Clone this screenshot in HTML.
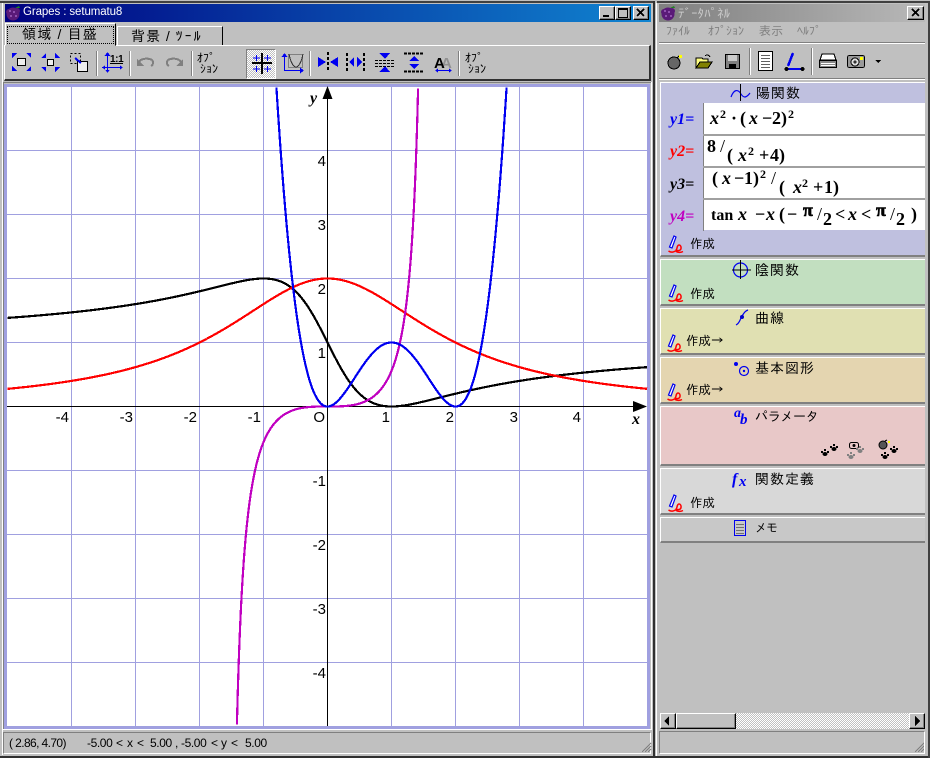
<!DOCTYPE html>
<html><head><meta charset="utf-8"><style>
html,body{margin:0;padding:0;background:#c0c0c0;width:930px;height:758px;overflow:hidden}
.a{position:absolute}
.t{position:absolute;white-space:nowrap;font-family:"Liberation Sans","IPAGothic","WenQuanYi Zen Hei",sans-serif;color:#000;line-height:1}
.p{position:absolute;left:660px;width:265px;box-sizing:border-box;border-top:1px solid #fff;border-left:1px solid #fff;border-bottom:2px solid #808080}
.btn{position:absolute;background:#c0c0c0;box-sizing:border-box;border:1px solid;border-color:#fff #000 #000 #fff;box-shadow:inset -1px -1px 0 #808080}
.box{position:absolute;left:703px;width:222px;background:#fff;box-sizing:border-box}
svg{position:absolute;overflow:visible}
.ar{font-family:"IPAGothic","WenQuanYi Zen Hei",sans-serif}
</style></head><body>
<!-- window frames -->
<div class="a" style="left:0;top:1px;width:655px;height:2px;background:#404040"></div>
<div class="a" style="left:657px;top:1px;width:273px;height:2px;background:#404040"></div>
<div class="a" style="left:653px;top:1px;width:2px;height:757px;background:#303030"></div>
<div class="a" style="left:656px;top:3px;width:1px;height:755px;background:#fff"></div>
<div class="a" style="left:2px;top:3px;width:1px;height:752px;background:#fff"></div>
<div class="a" style="left:0;top:756px;width:930px;height:2px;background:#303030"></div>
<div class="a" style="left:928px;top:3px;width:2px;height:755px;background:#404040"></div>

<!-- main title -->
<div class="a" style="left:5px;top:4px;width:646px;height:18px;background:linear-gradient(90deg,#000080,#1084d0)"></div>
<div class="t" style="left:23px;top:7px;font-size:11.500px;color:#fff;letter-spacing:-.1px">Grapes : setumatu8</div>
<div class="btn" style="left:599px;top:6px;width:16px;height:14px"></div>
<div class="btn" style="left:615px;top:6px;width:16px;height:14px"></div>
<div class="btn" style="left:633px;top:6px;width:16px;height:14px"></div>
<svg class="a" style="left:0;top:0" width="930" height="80">
 <g fill="#5a1a78"><circle cx="13" cy="14" r="6.500"/><circle cx="9" cy="12" r="3"/><circle cx="17" cy="11" r="3"/></g>
 <g fill="#a060c0"><circle cx="10" cy="11" r="1"/><circle cx="14" cy="12" r="1"/><circle cx="11" cy="16" r="1"/><circle cx="16" cy="16" r="1"/></g>
 <path d="M15 8l4-2 1 2z" fill="#208020"/>
 <g shape-rendering="crispEdges">
 <rect x="603" y="15" width="6" height="2" fill="#000"/>
 <path d="M618.500 8.500h9v9h-9zM618 9.500h10" fill="none" stroke="#000"/>
 <path d="M637 9l7 7M644 9l-7 7" stroke="#000" stroke-width="2"/>
 </g>
</svg>

<!-- tabs -->
<div class="a" style="left:5px;top:23px;width:111px;height:23px;box-sizing:border-box;border:1px solid;border-color:#fff #000 #c0c0c0 #fff;z-index:2;background:#c0c0c0"></div>
<div class="a" style="left:7px;top:26px;width:107px;height:18px;box-sizing:border-box;border:1px dotted #000;z-index:3"></div>
<div class="a" style="left:117px;top:26px;width:106px;height:20px;box-sizing:border-box;border:1px solid;border-color:#fff #000 #c0c0c0 #fff"></div>
<div class="t" style="left:22px;top:27px;font-size:14px;z-index:4;letter-spacing:1.200px">領域 / 目盛</div>
<div class="t" style="left:131px;top:29px;font-size:14px;letter-spacing:1px">背景 / <span style="letter-spacing:2px">ﾂｰﾙ</span></div>

<!-- toolbar main -->
<div class="a" style="left:4px;top:45px;width:647px;height:36px;box-sizing:border-box;border-top:1px solid #fff;border-left:1px solid #fff;border-right:2px solid #303030;border-bottom:2px solid #303030"></div>
<div class="a" style="left:246px;top:49px;width:30px;height:30px;box-sizing:border-box;border:1px solid;border-color:#808080 #fff #fff #808080;background:repeating-conic-gradient(#fff 0 25%,#c0c0c0 0 50%) 0 0/2px 2px"></div>
<svg class="a" style="left:0;top:0" width="660" height="82" shape-rendering="crispEdges">
 <g stroke="#808080"><path d="M96.500 51v25M129.500 51v25M191.500 51v25M309.500 51v25M458.500 51v25"/></g>
 <g stroke="#fff"><path d="M97.500 51v25M130.500 51v25M192.500 51v25M310.500 51v25M459.500 51v25"/></g>
 <!-- expand -->
 <rect x="17.500" y="58.500" width="8" height="7" fill="#eee" stroke="#000"/>
 <g fill="#0000f0"><path d="M12 53h5l-5 5zM31 53h-5l5 5zM12 71h5l-5-5zM31 71h-5l5-5z"/></g>
 <!-- shrink -->
 <rect x="47.500" y="59.500" width="6" height="6" fill="#eee" stroke="#000"/>
 <g fill="#0000f0"><path d="M46 58h-5l5-5zM55 58h5l-5-5zM46 67h-5l5 5zM55 67h5l-5 5z"/></g>
 <!-- zoom box -->
 <rect x="70.500" y="53.500" width="10" height="10" fill="none" stroke="#000" stroke-dasharray="2 2"/>
 <rect x="77.500" y="61.500" width="10" height="10" fill="#eee" stroke="#000"/>
 <path d="M75 58l6 5" stroke="#0000f0" stroke-width="2"/>
 <!-- 1:1 -->
 <path d="M107.500 54v17M102 67.500h20" stroke="#0000f0" fill="none"/>
 <path d="M107.500 52l-3 4h6zM102 67.500l3-2v4zM123 67.500l-3-2v4zM107.500 73l-2-3h4z" fill="#0000f0"/>
 <path d="M110 63.500h13" stroke="#000"/>
 <text x="110" y="62" font-family="Liberation Sans,sans-serif" font-size="10" font-weight="bold" letter-spacing="-.4" fill="#000">1:1</text>
 <!-- undo redo -->
 <path d="M139 62c2-4 10-4 13-2 2 2 1 5-1 6" fill="none" stroke="#808080" stroke-width="2"/>
 <path d="M137 59v7h7z" fill="#808080"/>
 <path d="M181 62c-2-4-10-4-13-2-2 2-1 5 1 6" fill="none" stroke="#808080" stroke-width="2"/>
 <path d="M183 59v7h-7z" fill="#808080"/>
 <!-- grid button -->
 <path d="M252 62.500h20M252 63.500h20M261.500 53v21M262.500 53v21" stroke="#000"/>
 <g stroke="#0000f0"><path d="M256.500 55v6M253 58h7M267.500 55v6M264 58h7M256.500 66v6M253 69h7M267.500 66v6M264 69h7"/></g>
 <!-- parabola -->
 <rect x="288.500" y="54.500" width="14" height="13" fill="#c0c0c0" stroke="#808080"/>
 <path d="M289 54c2 10 5 13 7 13s5-3 7-13" fill="none" stroke="#333"/>
 <path d="M284.500 56v14M284 70.500h18" stroke="#0000f0"/>
 <path d="M284.500 53l-3 4h6zM304 70.500l-4-3v6z" fill="#0000f0"/>
 <!-- fit icons -->
 <path d="M327.500 52v20M328.500 52v20" stroke="#000" stroke-dasharray="3 2"/>
 <path d="M326 62l-8-5v10zM330 62l8-5v10z" fill="#0000f0"/>
 <path d="M346.500 53v19M347.500 53v19M363.500 53v19M364.500 53v19" stroke="#000" stroke-dasharray="3 2"/>
 <path d="M349 62l5-5v10zM362 62l-5-5v10z" fill="#0000f0"/>
 <path d="M375 60.500h19M375 63.500h19M375 66.500h19" stroke="#000" stroke-dasharray="3 1" stroke-width="1"/>
 <path d="M385 59l-6-6h11zM385 66l-6 6h11z" fill="#0000f0"/>
 <path d="M404 53.500h19M404 71.500h19" stroke="#000" stroke-width="2" stroke-dasharray="3 1"/>
 <path d="M414 56l-5 5h10zM414 69l-5-5h10z" fill="#0000f0"/>
 <!-- AA -->
 <text x="441" y="68" font-family="Liberation Sans,sans-serif" font-size="15" font-weight="bold" fill="#909090">A</text>
 <text x="434" y="68" font-family="Liberation Sans,sans-serif" font-size="15" font-weight="bold" fill="#000">A</text>
 <path d="M436 70.500h15" stroke="#0000f0"/><path d="M435 70.500l3-2v4zM452 70.500l-3-2v4z" fill="#0000f0"/>
</svg>
<div class="t" style="left:197px;top:52px;font-size:12px">ｵﾌﾟ</div>
<div class="t" style="left:200px;top:63px;font-size:12px">ｼｮﾝ</div>
<div class="t" style="left:465px;top:52px;font-size:12px">ｵﾌﾟ</div>
<div class="t" style="left:468px;top:63px;font-size:12px">ｼｮﾝ</div>

<!-- plot -->
<div class="a" style="left:3px;top:82px;width:648px;height:1px;background:#808080"></div>
<div class="a" style="left:3px;top:82px;width:1px;height:648px;background:#808080"></div>
<div class="a" style="left:3px;top:729px;width:649px;height:1px;background:#fff"></div>
<div class="a" style="left:651px;top:82px;width:1px;height:648px;background:#fff"></div>
<svg id="g" class="a" style="left:0;top:0" width="930" height="758">
 <rect x="5.500" y="85.500" width="643" height="642" fill="#fff" stroke="#a0a0e0" stroke-width="3"/>
 <g stroke="#a0a0e0" shape-rendering="crispEdges">
  <path d="M71.500 87v639M135.500 87v639M199.500 87v639M263.500 87v639M391.500 87v639M455.500 87v639M519.500 87v639M583.500 87v639"/>
  <path d="M7 150.500h640M7 214.500h640M7 278.500h640M7 342.500h640M7 470.500h640M7 534.500h640M7 598.500h640M7 662.500h640"/>
 </g>
 <g stroke="#000" shape-rendering="crispEdges"><path d="M7 406.500h628M327.500 98v628"/></g>
 <path d="M327.500 86l-5 13h10z M647 406.500l-14-5.500v11z" fill="#000"/>
 <g fill="none" stroke-width="2.200" id="cv"></g>
 <g font-family="Liberation Sans,sans-serif" font-size="15" fill="#000" text-anchor="end">
  <text x="326" y="166">4</text><text x="326" y="230">3</text><text x="326" y="294">2</text><text x="326" y="358">1</text>
  <text x="326" y="486">-1</text><text x="326" y="550">-2</text><text x="326" y="614">-3</text><text x="326" y="678">-4</text>
  <text x="69" y="422">-4</text><text x="133" y="422">-3</text><text x="197" y="422">-2</text><text x="261" y="422">-1</text>
  <text x="325" y="422">O</text>
  <text x="390" y="422">1</text><text x="454" y="422">2</text><text x="518" y="422">3</text><text x="581" y="422">4</text>
 </g>
 <g font-family="Liberation Serif,serif" font-size="16" font-weight="bold" font-style="italic" fill="#000">
  <text x="310" y="103">y</text><text x="632" y="424">x</text>
 </g>
</svg>

<!-- main status -->
<div class="a" style="left:3px;top:732px;width:648px;height:22px;box-sizing:border-box;border:1px solid;border-color:#808080 #fff #fff #808080"></div>
<div class="t" style="left:9px;top:737px;font-size:12px;letter-spacing:-.6px">( 2.86, 4.70)</div>
<div class="t" style="left:87px;top:737px;font-size:12px;letter-spacing:-.4px">-5.00</div>
<div class="t" style="left:116px;top:737px;font-size:12px">&lt;</div>
<div class="t" style="left:127px;top:737px;font-size:12px">x</div>
<div class="t" style="left:137px;top:737px;font-size:12px">&lt;</div>
<div class="t" style="left:150px;top:737px;font-size:12px;letter-spacing:-.4px">5.00</div>
<div class="t" style="left:175px;top:737px;font-size:12px">,</div>
<div class="t" style="left:181px;top:737px;font-size:12px;letter-spacing:-.4px">-5.00</div>
<div class="t" style="left:211px;top:737px;font-size:12px">&lt;</div>
<div class="t" style="left:221px;top:737px;font-size:12px">y</div>
<div class="t" style="left:231px;top:737px;font-size:12px">&lt;</div>
<div class="t" style="left:245px;top:737px;font-size:12px;letter-spacing:-.4px">5.00</div>

<!-- right window title -->
<div class="a" style="left:659px;top:4px;width:266px;height:18px;background:linear-gradient(90deg,#808080,#b8b8b8)"></div>
<svg class="a" style="left:655px;top:0" width="20" height="22">
 <g fill="#5a1a78"><circle cx="13" cy="14" r="6.500"/><circle cx="9" cy="12" r="3"/><circle cx="17" cy="11" r="3"/></g>
 <g fill="#a060c0"><circle cx="10" cy="11" r="1"/><circle cx="14" cy="12" r="1"/><circle cx="11" cy="16" r="1"/><circle cx="16" cy="16" r="1"/></g>
 <path d="M15 8l4-2 1 2z" fill="#208020"/>
</svg>
<div class="t" style="left:678px;top:7px;font-size:13px;color:#c8c8c8">ﾃﾞｰﾀﾊﾟﾈﾙ</div>
<div class="btn" style="left:907px;top:6px;width:17px;height:14px"></div>
<svg class="a" style="left:0;top:0" width="930" height="82" shape-rendering="crispEdges">
 <path d="M912 9l7 7M919 9l-7 7" stroke="#000" stroke-width="2"/>
 <path d="M659 43.500h266" stroke="#fff"/><path d="M659 42.500h266" stroke="#808080"/>
 <path d="M659 79.500h266" stroke="#fff"/><path d="M659 78.500h266" stroke="#808080"/>
 <path d="M749.500 48v27M811.500 48v27" stroke="#808080"/><path d="M750.500 48v27M812.500 48v27" stroke="#fff"/>
 <!-- bomb -->
 <circle cx="674" cy="63" r="6" fill="#666" stroke="#000"/><path d="M677 58l2-2" stroke="#000"/><rect x="679" y="55" width="3" height="3" fill="#ff0"/>
 <!-- folder -->
 <path d="M696 58h6l1 1h5v9h-12z" fill="#ffff80" stroke="#000"/><path d="M696 68l4-6h12l-4 6z" fill="#808000" stroke="#000"/><path d="M705 56c2-2 4-1 5 1" fill="none" stroke="#000"/>
 <!-- floppy -->
 <rect x="725.500" y="54.500" width="14" height="14" fill="#808080" stroke="#000"/><rect x="728" y="55" width="9" height="6" fill="#ccc"/><rect x="729" y="64" width="7" height="4" fill="#000"/>
 <!-- doc -->
 <rect x="758.500" y="51.500" width="14" height="19" fill="#fff" stroke="#000"/><path d="M761 55.500h9M761 58.500h9M761 61.500h9M761 64.500h9M761 67.500h9" stroke="#606060"/>
 <!-- pen -->
 <path d="M788 66l5-13" stroke="#0000f0" stroke-width="2.500"/><path d="M786 69h16" stroke="#0000f0" stroke-width="2"/><circle cx="786.500" cy="69" r="2" fill="#000"/><circle cx="802.500" cy="69" r="2" fill="#000"/>
 <!-- printer -->
 <path d="M822 54h12l2 6h-16z" fill="#fff" stroke="#000"/><rect x="819.500" y="60.500" width="17" height="7" fill="#888" stroke="#000"/><path d="M821 63.500h14M821 65.500h14" stroke="#fff"/>
 <!-- camera -->
 <rect x="847.500" y="55.500" width="17" height="12" rx="2" fill="#999" stroke="#000"/><circle cx="855" cy="62" r="4" fill="#ddd" stroke="#000"/><circle cx="855" cy="62" r="1.500" fill="#333"/><rect x="860" y="57" width="3" height="3" fill="#ff0"/>
 <path d="M875 60h6l-3 3z" fill="#000"/>
</svg>
<div class="t" style="left:666px;top:25px;font-size:12px;color:#808080">ﾌｧｲﾙ</div>
<div class="t" style="left:708px;top:25px;font-size:12px;color:#808080">ｵﾌﾟｼｮﾝ</div>
<div class="t" style="left:759px;top:25px;font-size:12px;color:#808080">表示</div>
<div class="t" style="left:797px;top:25px;font-size:12px;color:#808080">ﾍﾙﾌﾟ</div>

<!-- panels -->
<div class="p" style="top:82px;height:175px;background:#bfc0df"></div>
<div class="p" style="top:259px;height:47px;background:#c2dfc0"></div>
<div class="p" style="top:308px;height:47px;background:#e0e0b2"></div>
<div class="p" style="top:357px;height:47px;background:#e4d5b0"></div>
<div class="p" style="top:406px;height:60px;background:#e8c8c8"></div>
<div class="p" style="top:468px;height:47px;background:#d8d8d8"></div>
<div class="p" style="top:517px;height:26px;background:#c8c8c8"></div>
<div class="box" style="top:103px;height:31px"></div>
<div class="box" style="top:136px;height:30px"></div>
<div class="box" style="top:168px;height:30px"></div>
<div class="box" style="top:200px;height:30px"></div>
<div class="a" style="left:703px;top:103px;width:1px;height:128px;background:#808080"></div>
<div class="a" style="left:703px;top:134px;width:222px;height:2px;background:#a0a0a0"></div>
<div class="a" style="left:703px;top:166px;width:222px;height:2px;background:#a0a0a0"></div>
<div class="a" style="left:703px;top:198px;width:222px;height:2px;background:#a0a0a0"></div>

<div class="t" style="left:756px;top:86px;font-size:14px;letter-spacing:1px">陽関数</div>
<div class="t" style="left:755px;top:263px;font-size:14px;letter-spacing:1px">陰関数</div>
<div class="t" style="left:755px;top:311px;font-size:14px;letter-spacing:1px">曲線</div>
<div class="t" style="left:755px;top:361px;font-size:14px;letter-spacing:1px">基本図形</div>
<div class="t" style="left:755px;top:410px;font-size:13px;letter-spacing:-.3px">パラメータ</div>
<div class="t" style="left:755px;top:472px;font-size:14px;letter-spacing:1px">関数定義</div>
<div class="t" style="left:755px;top:522px;font-size:12px;letter-spacing:-1px">メモ</div>
<div class="t" style="left:690px;top:238px;font-size:12.500px">作成</div>
<div class="t" style="left:690px;top:288px;font-size:12.500px">作成</div>
<div class="t" style="left:686px;top:335px;font-size:12.500px">作成<span class="ar" style="letter-spacing:-1px">→</span></div>
<div class="t" style="left:686px;top:384px;font-size:12.500px">作成<span class="ar" style="letter-spacing:-1px">→</span></div>
<div class="t" style="left:690px;top:497px;font-size:12.500px">作成</div>

<svg class="a" style="left:0;top:0" width="930" height="758">
 <defs>
  <g id="pen"><path d="M1.500 11L6 0l2 1-4 11z" fill="#fff" stroke="#0000f0" stroke-width="1.200"/><path d="M0.500 15c3 2 5 1 7 0s1-6 3.500-6 3 5 0 5.500-3-1-3-1M8 15.500c3 1.500 5 1 7 0" fill="none" stroke="#f00" stroke-width="1.500"/></g>
  <g id="paw"><ellipse cx="4" cy="5" rx="2.500" ry="2"/><rect x="0" y="2" width="2" height="2"/><rect x="3" y="0" width="2" height="2"/><rect x="6" y="2" width="2" height="2"/></g>
 </defs>
 <use href="#pen" x="668" y="236"/><use href="#pen" x="668" y="285"/><use href="#pen" x="667" y="335"/><use href="#pen" x="667" y="384"/><use href="#pen" x="668" y="495"/>
 <!-- panel icons -->
 <path d="M731 97c3-8 7-8 10-3s6 3 9-1" fill="none" stroke="#0000f0" stroke-width="1.200"/><path d="M740.500 84v17" stroke="#000"/>
 <circle cx="740.500" cy="270" r="7" fill="none" stroke="#0000f0" stroke-width="1.200"/><path d="M732 270h19" stroke="#000"/><path d="M740.500 260v19" stroke="#000"/>
 <path d="M736 325c4-2 4-6 6-9s3-5 6-6" fill="none" stroke="#0000f0" stroke-width="1.200"/><circle cx="742" cy="317" r="2" fill="#00c"/>
 <circle cx="736" cy="364" r="2" fill="#0000f0"/><circle cx="744" cy="371" r="4.500" fill="none" stroke="#0000f0" stroke-width="1.200"/><circle cx="744" cy="371" r="1.200" fill="#0000f0"/>
 <g font-family="Liberation Serif,serif" font-weight="bold" font-style="italic" fill="#0000f0"><text x="734" y="417" font-size="14">a</text><text x="740" y="424" font-size="15">b</text><text x="732" y="484" font-size="16">f</text><text x="739" y="486" font-size="15">x</text></g>
 <rect x="734.500" y="520.500" width="11" height="15" fill="none" stroke="#0000f0"/><path d="M736 524.500h8M736 527.500h8M736 530.500h8M736 533.500h8" stroke="#707070"/>
 <!-- paws -->
 <use href="#paw" x="821" y="449"/><use href="#paw" x="830" y="444"/>
 <rect x="849.500" y="442.500" width="9" height="6" rx="2" fill="none" stroke="#000"/><circle cx="854" cy="445.500" r="1.500" fill="#000"/>
 <g fill="#808080"><use href="#paw" x="856" y="446"/><use href="#paw" x="847" y="452"/></g>
 <circle cx="883" cy="445" r="4" fill="#555" stroke="#000"/><path d="M885 441l2-1" stroke="#000"/><rect x="888" y="441" width="2" height="2" fill="#ff0"/>
 <use href="#paw" x="890" y="446"/><use href="#paw" x="881" y="452"/>
 <!-- equations -->
 <g font-family="Liberation Serif,serif" font-size="16" font-weight="bold" font-style="italic">
  <text x="670" y="124" fill="#0000f0">y1=</text><text x="670" y="156" fill="#f00">y2=</text><text x="670" y="189" fill="#000">y3=</text><text x="670" y="221" fill="#c000c0">y4=</text>
 </g>
 <g font-family="Liberation Serif,serif" font-size="18" font-weight="bold" fill="#000">
  <text x="710" y="124" font-style="italic">x</text><text x="720" y="118" font-size="12">2</text><text x="731" y="124">·</text><text x="740" y="124">(</text><text x="749" y="124" font-style="italic">x</text><text x="762" y="124">−</text><text x="772" y="124">2</text><text x="781" y="124">)</text><text x="788" y="118" font-size="12">2</text>
  <text x="707" y="152">8</text><text x="720" y="152" font-weight="normal">/</text><text x="727" y="161">(</text><text x="738" y="161" font-style="italic">x</text><text x="748" y="155" font-size="12">2</text><text x="759" y="161">+</text><text x="770" y="161">4</text><text x="779" y="161">)</text>
  <text x="712" y="184">(</text><text x="722" y="184" font-style="italic">x</text><text x="734" y="184">−</text><text x="744" y="184">1</text><text x="753" y="184">)</text><text x="760" y="178" font-size="12">2</text><text x="771" y="184" font-weight="normal">/</text><text x="779" y="193">(</text><text x="793" y="193" font-style="italic">x</text><text x="802" y="187" font-size="12">2</text><text x="813" y="193">+</text><text x="824" y="193">1</text><text x="833" y="193">)</text>
  <text x="711" y="220" font-size="16">tan</text><text x="738" y="220" font-style="italic">x</text><text x="755" y="220">−</text><text x="766" y="220" font-style="italic">x</text><text x="779" y="220">(</text><text x="787" y="220">−</text><text x="803" y="216" stroke="#000" stroke-width=".6">π</text><text x="817" y="220" font-weight="normal">/</text><text x="823" y="225">2</text><text x="835" y="220">&lt;</text><text x="848" y="220" font-style="italic">x</text><text x="861" y="220">&lt;</text><text x="876" y="216" stroke="#000" stroke-width=".6">π</text><text x="890" y="220" font-weight="normal">/</text><text x="896" y="225">2</text><text x="911" y="220">)</text>
 </g>
</svg>

<!-- scrollbar -->
<div class="a" style="left:660px;top:713px;width:265px;height:16px;background:repeating-conic-gradient(#fff 0 25%,#c0c0c0 0 50%) 0 0/2px 2px"></div>
<div class="btn" style="left:660px;top:713px;width:16px;height:16px"></div>
<div class="btn" style="left:676px;top:713px;width:60px;height:16px"></div>
<div class="btn" style="left:909px;top:713px;width:16px;height:16px"></div>
<svg class="a" style="left:0;top:0" width="930" height="758" shape-rendering="crispEdges">
 <path d="M664 721l5-5v10zM920 721l-5-5v10z" fill="#000"/>
 <path d="M651 743l-9 9M651 746l-6 6M651 749l-3 3" stroke="#808080" fill="none"/>
 <path d="M924 743l-9 9M924 746l-6 6M924 749l-3 3" stroke="#808080" fill="none"/>
</svg>
<div class="a" style="left:659px;top:731px;width:266px;height:23px;box-sizing:border-box;border:1px solid;border-color:#808080 #fff #fff #808080"></div>

<script>
(function(){
 var defs=[
  ['#000',function(x){return (x-1)*(x-1)/(x*x+1)},-5,5],
  ['#f00',function(x){return 8/(x*x+4)},-5,5],
  ['#c000c0',function(x){return Math.tan(x)-x},-1.56,1.56],
  ['#0000f0',function(x){return x*x*(x-2)*(x-2)},-1.2,3.2]
 ];
 var g=document.getElementById('cv'),ns='http://www.w3.org/2000/svg';
 defs.forEach(function(d){
  var s='',on=false;
  for(var x=d[2];x<=d[3];x+=0.0005){
   var y=d[1](x),px=327.5+64*x,py=406.5-64*y;
   if(py<87||py>726||px<7||px>647){on=false;continue;}
   s+=(on?'L':'M')+px.toFixed(2)+' '+py.toFixed(2);on=true;
  }
  var p=document.createElementNS(ns,'path');
  p.setAttribute('d',s);p.setAttribute('stroke',d[0]);p.setAttribute('shape-rendering','crispEdges');
  g.appendChild(p);
 });
})();
</script>
</body></html>
